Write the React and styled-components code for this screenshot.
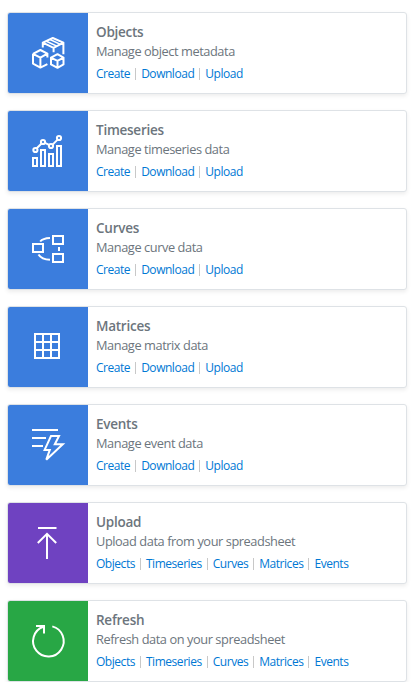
import React from "react";
import styled, { createGlobalStyle } from "styled-components";

const GlobalStyle = createGlobalStyle`
  *, *::before, *::after { box-sizing: border-box; }
  body {
    margin: 0;
    background: #fff;
    font-family: "Open Sans", "Noto Sans", sans-serif;
    color: #6c757d;
  }
`;

const CardList = styled.main`
  display: flex;
  flex-direction: column;
  gap: 16px;
  width: 400px;
  margin: 12px 0 0 7px;
`;

const Card = styled.section`
  display: flex;
  height: 82px;
  border: 1px solid #dee2e6;
  border-radius: 3px;
  background: #fff;
  box-shadow: 0 2px 4px rgba(0, 0, 0, 0.075);
  overflow: hidden;
`;

const IconTile = styled.div`
  display: flex;
  flex: 0 0 80px;
  align-items: center;
  justify-content: center;
  background: ${({ $color }) => $color};
`;

const Glyph = styled.svg`
  width: 48px;
  height: 48px;
  fill: none;
  stroke: #fff;
  stroke-width: 2;
`;

const Content = styled.div`
  padding: 9px 8px 0;
  white-space: nowrap;
`;

const Title = styled.h2`
  margin: 0;
  font-size: 13.5px;
  font-weight: 600;
  line-height: 20px;
  letter-spacing: -0.25px;
`;

const Description = styled.p`
  margin: 0;
  font-size: 12.8px;
  line-height: 18px;
  letter-spacing: -0.43px;
`;

const Links = styled.nav`
  display: flex;
  margin-top: 5px;
  font-size: 12px;
  line-height: 18px;
  letter-spacing: -0.46px;
`;

const Link = styled.a`
  color: #0078d4;
  text-decoration: none;

  & + &::before {
    content: "";
    display: inline-block;
    width: 1px;
    height: 12px;
    margin: 0 5px;
    background: #c8c8c8;
    vertical-align: -2px;
  }
`;

const icons = {
  objects: (
    <g strokeLinejoin="round">
      <path d="M9 24.8 16.4 21l7 3.6v4M9 24.8v9.8l7.4 4 7-3.4M9 24.8l7.4 3.8 7-4M16.4 28.6v10" />
      <path d="M18.8 18.4v-4.8L28.8 9l10.6 4.6v11.6M18.8 13.6l10.8 5.2 9.8-5.2M29.6 18.8v4.4" />
      <path strokeWidth="1.6" d="M22.4 12.2l10.4 4.9M26 10.5l10.4 4.9" />
      <path d="m27 28.6 6.5-3.4 6 3.4v6.8l-6 3.4-6.5-3.4zM27 28.6l6.5 3.2 6-3.2M33.5 31.8v7" />
    </g>
  ),
  timeseries: (
    <g>
      <path d="M9 31h4v8H9zM17 23h4v16h-4zM25 27h4v12h-4zM33 19h4v20h-4z" />
      <path d="m12.5 21.5 5-5M21 15.8l4.5 2.4M28.6 17.6l5-5" />
      <circle cx="11.4" cy="23" r="2.1" />
      <circle cx="19" cy="15" r="2.1" />
      <circle cx="27" cy="19" r="2.1" />
      <circle cx="35" cy="11" r="2.1" />
    </g>
  ),
  curves: (
    <g>
      <path d="M9 19h10v8H9zM29 11h10v8H29zM29 29h10v8H29z" />
      <path d="M26 13c-4.8.2-8 1.2-9.8 3.5M14.5 29.5c2.2 3.6 6 5.2 11.5 5.3M35 22v4" />
    </g>
  ),
  matrices: <path d="M11 11h24v24H11zM19 11v24M27 11v24M11 19h24M11 27h24" />,
  events: (
    <g>
      <path d="M8 9h26M8 17h14M8 25h11" />
      <path d="M27 15h8l-4.2 8.2h8L22.3 38.7l3.5-9.8h-5.2z" />
    </g>
  ),
  upload: <path d="M14 9h18.5M23 40V15M13.8 24 23 14.8l9.2 9.2" />,
  refresh: <path d="M28.3 9.4A15.3 15.3 0 1 1 19.2 9.8M12 9h8v7.5" />,
};

const dataActions = ["Create", "Download", "Upload"];
const dataTypes = ["Objects", "Timeseries", "Curves", "Matrices", "Events"];
const blue = "#3b7ddd";

const cards = [
  { icon: "objects", color: blue, title: "Objects", text: "Manage object metadata", links: dataActions },
  { icon: "timeseries", color: blue, title: "Timeseries", text: "Manage timeseries data", links: dataActions },
  { icon: "curves", color: blue, title: "Curves", text: "Manage curve data", links: dataActions },
  { icon: "matrices", color: blue, title: "Matrices", text: "Manage matrix data", links: dataActions },
  { icon: "events", color: blue, title: "Events", text: "Manage event data", links: dataActions },
  { icon: "upload", color: "#6f42c1", title: "Upload", text: "Upload data from your spreadsheet", links: dataTypes },
  { icon: "refresh", color: "#28a745", title: "Refresh", text: "Refresh data on your spreadsheet", links: dataTypes },
];

export default function App() {
  return (
    <>
      <GlobalStyle />
      <CardList>
        {cards.map((card) => (
          <Card key={card.title}>
            <IconTile $color={card.color}>
              <Glyph viewBox="0 0 48 48" aria-hidden="true">{icons[card.icon]}</Glyph>
            </IconTile>
            <Content>
              <Title>{card.title}</Title>
              <Description>{card.text}</Description>
              <Links>
                {card.links.map((label) => (
                  <Link key={label} href="#">{label}</Link>
                ))}
              </Links>
            </Content>
          </Card>
        ))}
      </CardList>
    </>
  );
}
